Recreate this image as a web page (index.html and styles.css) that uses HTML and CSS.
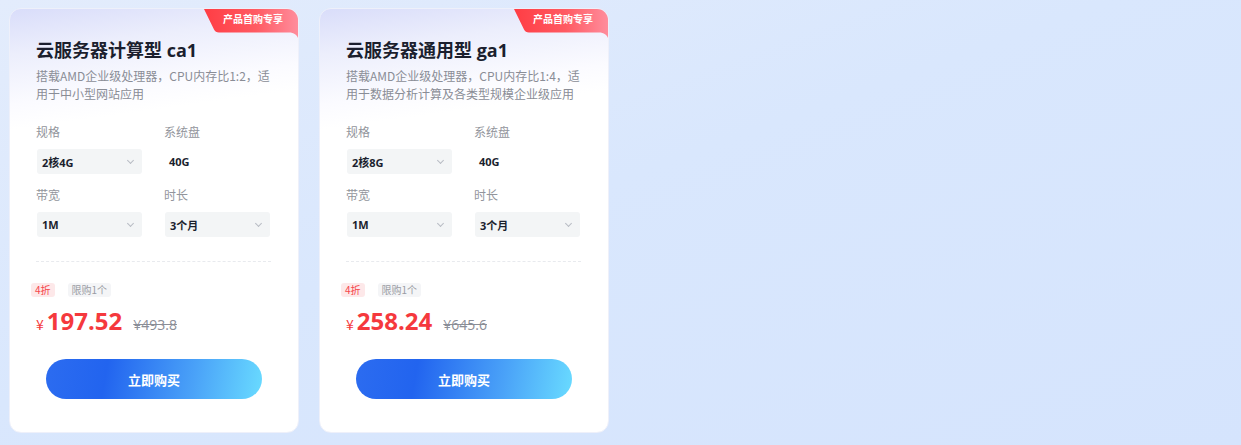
FILE: index.html
```html
<!DOCTYPE html>
<html lang="zh-CN">
<head>
  <meta charset="UTF-8">
  <meta name="viewport" content="width=device-width, initial-scale=1.0">
  <title>云服务器</title>
  <link rel="stylesheet" href="styles.css">
</head>
<body>
  <div class="card">
    <div class="badge">
      <svg class="badge-bg" width="95" height="30" viewBox="0 0 95 30">
        <defs>
          <linearGradient id="bg1" x1="0" y1="0" x2="1" y2="0">
            <stop offset="0" stop-color="#ff3d44"/>
            <stop offset="0.55" stop-color="#ff5a62"/>
            <stop offset="1" stop-color="#ff8d9c"/>
          </linearGradient>
        </defs>
        <path d="M1 0 H95 V29 C94 26 91 23.5 86 23.5 H16 C13.5 23.5 12 22.5 11 20.5 Z" fill="url(#bg1)"/>
      </svg>
      <span class="badge-text">产品首购专享</span>
    </div>
    <h2 class="title">云服务器计算型 ca1</h2>
    <p class="desc">搭载AMD企业级处理器，CPU内存比1:2，适用于中小型网站应用</p>

    <div class="specs">
      <div class="field">
        <div class="label">规格</div>
        <div class="select"><span>2核4G</span><i class="chev"></i></div>
      </div>
      <div class="field">
        <div class="label">系统盘</div>
        <div class="value">40G</div>
      </div>
      <div class="field">
        <div class="label">带宽</div>
        <div class="select"><span>1M</span><i class="chev"></i></div>
      </div>
      <div class="field">
        <div class="label">时长</div>
        <div class="select"><span>3个月</span><i class="chev"></i></div>
      </div>
    </div>

    <div class="divider"></div>

    <div class="tags">
      <span class="tag tag-off">4折</span>
      <span class="tag tag-limit">限购1个</span>
    </div>
    <div class="price-row">
      <span class="yen">¥</span><span class="price">197.52</span>
      <span class="old-price">¥493.8</span>
    </div>
    <button class="buy-btn">立即购买</button>
  </div>

  <div class="card">
    <div class="badge">
      <svg class="badge-bg" width="95" height="30" viewBox="0 0 95 30">
        <defs>
          <linearGradient id="bg2" x1="0" y1="0" x2="1" y2="0">
            <stop offset="0" stop-color="#ff3d44"/>
            <stop offset="0.55" stop-color="#ff5a62"/>
            <stop offset="1" stop-color="#ff8d9c"/>
          </linearGradient>
        </defs>
        <path d="M1 0 H95 V29 C94 26 91 23.5 86 23.5 H16 C13.5 23.5 12 22.5 11 20.5 Z" fill="url(#bg2)"/>
      </svg>
      <span class="badge-text">产品首购专享</span>
    </div>
    <h2 class="title">云服务器通用型 ga1</h2>
    <p class="desc">搭载AMD企业级处理器，CPU内存比1:4，适用于数据分析计算及各类型规模企业级应用</p>

    <div class="specs">
      <div class="field">
        <div class="label">规格</div>
        <div class="select"><span>2核8G</span><i class="chev"></i></div>
      </div>
      <div class="field">
        <div class="label">系统盘</div>
        <div class="value">40G</div>
      </div>
      <div class="field">
        <div class="label">带宽</div>
        <div class="select"><span>1M</span><i class="chev"></i></div>
      </div>
      <div class="field">
        <div class="label">时长</div>
        <div class="select"><span>3个月</span><i class="chev"></i></div>
      </div>
    </div>

    <div class="divider"></div>

    <div class="tags">
      <span class="tag tag-off">4折</span>
      <span class="tag tag-limit">限购1个</span>
    </div>
    <div class="price-row">
      <span class="yen">¥</span><span class="price">258.24</span>
      <span class="old-price">¥645.6</span>
    </div>
    <button class="buy-btn">立即购买</button>
  </div>
</body>
</html>
```

FILE: styles.css
```css
body {
  margin: 0;
  padding: 8px 9px;
  height: 445px;
  box-sizing: border-box;
  display: flex;
  gap: 20px;
  align-items: flex-start;
  font-family: "Open Sans", "Noto Sans CJK SC", sans-serif;
  background: linear-gradient(160deg, #e3ecfc 0%, #d9e7fd 45%, #d5e4fd 100%);
  color: #1b1f2e;
}

.card {
  position: relative;
  width: 290px;
  height: 425px;
  box-sizing: border-box;
  padding: 28px 27px 0 26px;
  border-radius: 12px;
  overflow: hidden;
  border: 1px solid #eef0fa;
  background: linear-gradient(172deg, #d9ddfa 0%, #eceefc 45px, #fbfbff 95px, #ffffff 120px);
}

.badge {
  position: absolute;
  top: 0;
  right: 0;
  width: 95px;
  height: 30px;
}

.badge-bg {
  position: absolute;
  top: 0;
  left: 0;
}

.badge-text {
  position: absolute;
  left: 18px;
  top: 2px;
  width: 64px;
  text-align: center;
  font-size: 10px;
  line-height: 16px;
  font-weight: 700;
  color: #fff;
  font-family: "Noto Sans CJK SC", sans-serif;
}

.title {
  margin: 0;
  font-size: 18px;
  line-height: 26px;
  font-weight: 700;
  color: #1b1f2e;
}

.desc {
  margin: 4px -6px 0 0;
  font-size: 12px;
  line-height: 18px;
  color: #8a8d96;
  font-family: "Noto Sans CJK SC", sans-serif;
}

.specs {
  margin-top: 20px;
  display: grid;
  grid-template-columns: 106px 106px;
  column-gap: 22px;
  row-gap: 12px;
}

.label {
  font-size: 12px;
  line-height: 18px;
  color: #92959c;
  margin-bottom: 8px;
  font-family: "Noto Sans CJK SC", sans-serif;
}

.select {
  height: 25px;
  margin-left: 1px;
  padding: 0 5px;
  border-radius: 3px;
  background: #f3f5f6;
  display: flex;
  align-items: center;
  justify-content: space-between;
  font-size: 11px;
  font-weight: 700;
  color: #1b1f2e;
}

.chev {
  width: 4px;
  height: 4px;
  margin-right: 4px;
  margin-top: -3px;
  border-right: 1px solid #b8bcc4;
  border-bottom: 1px solid #b8bcc4;
  transform: rotate(45deg);
}

.value {
  height: 25px;
  line-height: 25px;
  padding-left: 5px;
  font-size: 11px;
  font-weight: 700;
  color: #1b1f2e;
}

.divider {
  margin-top: 24px;
  border-top: 1px dashed #e8eaee;
}

.tags {
  margin: 21px 0 0 -5px;
  display: flex;
  gap: 13px;
}

.tag {
  height: 14px;
  line-height: 14px;
  padding: 0 4px;
  border-radius: 3px;
  font-size: 10px;
  font-family: "Noto Sans CJK SC", sans-serif;
}

.tag-off {
  background: #fde8e9;
  color: #f5454a;
}

.tag-limit {
  background: #f4f5f7;
  color: #9a9ca3;
}

.price-row {
  margin-top: 8px;
  height: 32px;
  display: flex;
  align-items: baseline;
  color: #f5393d;
}

.yen {
  font-size: 14px;
  margin-right: 3px;
  font-family: "Noto Sans CJK SC", sans-serif;
}

.price {
  font-size: 24px;
  font-weight: 700;
  line-height: 32px;
}

.old-price {
  margin-left: 11px;
  font-size: 14px;
  color: #8a8d96;
  text-decoration: line-through;
}

.buy-btn {
  display: block;
  margin: 22px 0 0 10px;
  width: 216px;
  height: 40px;
  border: none;
  border-radius: 20px;
  background: linear-gradient(100deg, #2c6cf0 0%, #2264ef 28%, #4aa2f8 68%, #69dbff 100%);
  color: #fff;
  font-size: 13px;
  font-weight: 700;
  font-family: "Noto Sans CJK SC", sans-serif;
  cursor: pointer;
}
```
